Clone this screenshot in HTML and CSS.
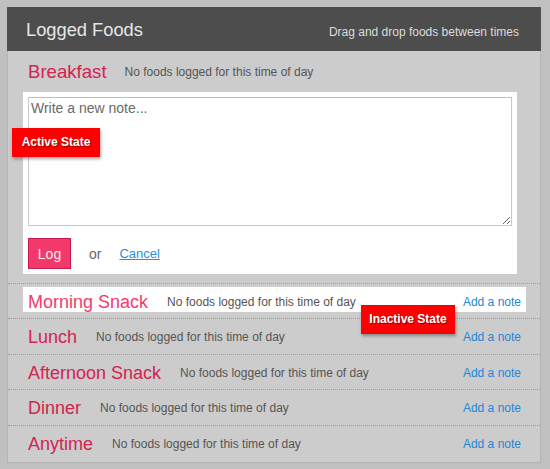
FILE: index.html
```html
<!DOCTYPE html>
<html>
<head>
<meta charset="utf-8">
<link rel="stylesheet" href="styles.css">
</head>
<body>
<div class="panel">
  <div class="panel-header">
    <h1 class="panel-title">Logged Foods</h1>
    <span class="panel-hint">Drag and drop foods between times</span>
  </div>

  <section class="meal meal-active">
    <div class="meal-head">
      <h2 class="meal-name meal-name-lead">Breakfast</h2>
      <span class="meal-empty">No foods logged for this time of day</span>
    </div>
    <div class="note-box">
      <textarea class="note-input" placeholder="Write a new note..."></textarea>
      <div class="note-actions">
        <button class="btn-log">Log</button>
        <span class="note-or">or</span>
        <a class="note-cancel" href="#">Cancel</a>
      </div>
    </div>
  </section>

  <section class="meal">
    <div class="meal-row meal-row-hover">
      <h2 class="meal-name meal-name-hover">Morning Snack</h2>
      <span class="meal-empty">No foods logged for this time of day</span>
      <a class="add-note" href="#">Add a note</a>
    </div>
  </section>

  <section class="meal">
    <div class="meal-row">
      <h2 class="meal-name">Lunch</h2>
      <span class="meal-empty">No foods logged for this time of day</span>
      <a class="add-note" href="#">Add a note</a>
    </div>
  </section>

  <section class="meal">
    <div class="meal-row">
      <h2 class="meal-name">Afternoon Snack</h2>
      <span class="meal-empty">No foods logged for this time of day</span>
      <a class="add-note" href="#">Add a note</a>
    </div>
  </section>

  <section class="meal">
    <div class="meal-row">
      <h2 class="meal-name">Dinner</h2>
      <span class="meal-empty">No foods logged for this time of day</span>
      <a class="add-note" href="#">Add a note</a>
    </div>
  </section>

  <section class="meal">
    <div class="meal-row">
      <h2 class="meal-name">Anytime</h2>
      <span class="meal-empty">No foods logged for this time of day</span>
      <a class="add-note" href="#">Add a note</a>
    </div>
  </section>

  <span class="state-label state-active">Active State</span>
  <span class="state-label state-inactive">Inactive State</span>
</div>
</body>
</html>
```

FILE: styles.css
```css
html, body {
  margin: 0;
  padding: 0;
}
body {
  background: #c0c0c0;
  font-family: "Liberation Sans", Arial, sans-serif;
  width: 550px;
  height: 469px;
  overflow: hidden;
}
.panel {
  position: relative;
  margin: 7px 0 0 7px;
  width: 532px;
  background: #cccccc;
  border: 1px solid #b4b4b4;
  border-top: 0;
  padding-bottom: 2px;
}
.panel-header {
  height: 44px;
  box-sizing: border-box;
  background: #4d4d4d;
  display: flex;
  align-items: baseline;
  justify-content: space-between;
  padding: 9px 21px 0 18px;
  margin: 0 -1px;
}
.panel-title {
  margin: 0;
  font-size: 18.3px;
  font-weight: normal;
  line-height: 28px;
  color: #e6e6e6;
  padding-left: 1px;
}
.panel-hint {
  font-size: 12px;
  color: #dcdcdc;
  padding-right: 1px;
}

.meal {
  border-top: 1px dotted #9a9a9a;
}
.meal-active {
  border-top: 0;
  padding: 0 23px 9px 15px;
}
.meal-head {
  height: 41px;
  display: flex;
  align-items: center;
  padding-left: 5px;
}
.meal-name {
  margin: 0 19px 0 0;
  font-size: 18px;
  font-weight: normal;
  line-height: 20px;
  color: #d4234f;
}
.meal-name-lead {
  font-size: 18.6px;
  margin-right: 18px;
}
.meal-name-hover {
  color: #f7396d;
}
.meal-empty {
  font-size: 12px;
  color: #555555;
}

.note-box {
  background: #ffffff;
  padding: 5px;
}
.note-input {
  display: block;
  width: 100%;
  height: 129px;
  box-sizing: border-box;
  margin: 0;
  padding: 2px 2px;
  border: 1px solid #c8c8c8;
  border-top-color: #bdbdbd;
  font-family: "Liberation Sans", Arial, sans-serif;
  font-size: 14px;
  color: #333;
  resize: vertical;
  outline: none;
}
.note-input::placeholder {
  color: #6a6a6a;
}
.note-actions {
  margin-top: 12px;
  height: 31px;
  display: flex;
  align-items: center;
}
.btn-log {
  width: 43px;
  height: 31px;
  box-sizing: border-box;
  margin: 0;
  padding: 0;
  background: #f3386b;
  border: 1px solid #c41b4c;
  color: #ffeef2;
  font-family: "Liberation Sans", Arial, sans-serif;
  font-size: 14px;
}
.note-or {
  margin-left: 18px;
  font-size: 14px;
  color: #666666;
}
.note-cancel {
  margin-left: 18px;
  font-size: 13px;
  color: #2a8ee0;
  text-decoration: underline;
}

.meal-row {
  margin: 3px 14px 6.4px 15px;
  height: 25px;
  box-sizing: border-box;
  padding: 5px 5px 0 5px;
  display: flex;
  align-items: center;
}
.meal-row-hover {
  background: #ffffff;
}
.add-note {
  margin-left: auto;
  font-size: 12px;
  color: #2387d8;
  text-decoration: none;
}

.state-label {
  position: absolute;
  height: 29px;
  line-height: 29px;
  text-align: center;
  background: #ff0000;
  color: #ffffff;
  font-size: 12px;
  font-weight: bold;
  text-shadow: 1px 1px 1px rgba(0, 0, 0, 0.45);
  box-shadow: 1px 2px 3px rgba(0, 0, 0, 0.35);
}
.state-active {
  left: 4px;
  top: 121px;
  width: 88px;
}
.state-inactive {
  left: 353px;
  top: 298px;
  width: 94px;
}
```
